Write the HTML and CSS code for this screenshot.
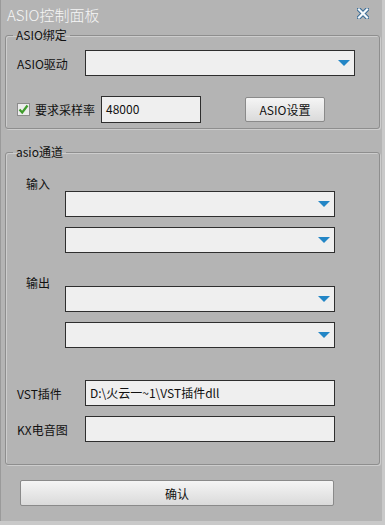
FILE: index.html
```html
<!DOCTYPE html>
<html lang="zh-CN">
<head>
    <meta charset="UTF-8">
    <title>ASIO控制面板</title>
    <link rel="stylesheet" href="styles.css">
</head>
<body>
    <div class="window">
        <div class="titlebar">
            <span class="title">ASIO控制面板</span>
            <svg class="close-icon" width="12" height="11" viewBox="0 0 12 11">
                <path d="M2 1.5 L10 9.5 M10 1.5 L2 9.5" stroke="#3c6d96" stroke-width="4.4" stroke-linecap="square"/>
                <path d="M2 1.5 L10 9.5 M10 1.5 L2 9.5" stroke="#f4f8fb" stroke-width="2.2" stroke-linecap="square"/>
            </svg>
        </div>
        <div class="content">
            <fieldset class="group">
                <legend>ASIO绑定</legend>
                <div class="rows binding">
                    <div class="row">
                        <span class="label">ASIO驱动</span>
                        <div class="combo"><span class="arrow"></span></div>
                    </div>
                    <div class="row rate-row">
                        <svg class="checkbox" width="13" height="13" viewBox="0 0 13 13">
                            <rect x="0.5" y="0.5" width="12" height="12" fill="#ececec" stroke="#8c8c8c"/>
                            <path d="M2.5 6.5 L5.2 9.5 L10.5 2.5" fill="none" stroke="#3f9c2c" stroke-width="2.2"/>
                        </svg>
                        <span class="check-label">要求采样率</span>
                        <div class="field rate">48000</div>
                        <button class="btn asio-btn">ASIO设置</button>
                    </div>
                </div>
            </fieldset>

            <fieldset class="group channels">
                <legend>asio通道</legend>
                <div class="rows">
                    <div class="section-label first">输入</div>
                    <div class="combo indent"><span class="arrow"></span></div>
                    <div class="combo indent gap"><span class="arrow"></span></div>

                    <div class="section-label second">输出</div>
                    <div class="combo indent"><span class="arrow"></span></div>
                    <div class="combo indent gap"><span class="arrow"></span></div>

                    <div class="row plugin-row">
                        <span class="label">VST插件</span>
                        <div class="field wide">D:\火云一~1\VST插件dll</div>
                    </div>
                    <div class="row plugin-row next">
                        <span class="label">KX电音图</span>
                        <div class="field wide"></div>
                    </div>
                </div>
            </fieldset>

            <button class="btn confirm">确认</button>
        </div>
    </div>
</body>
</html>
```

FILE: styles.css
```css
* {
    box-sizing: border-box;
}
body {
    margin: 0;
    width: 385px;
    height: 525px;
    overflow: hidden;
    background-color: #c9c9c9;
    font-family: "Noto Sans CJK SC", sans-serif;
    font-size: 12px;
    color: #111;
}
.window {
    width: 382px;
    height: 521px;
    background-color: #b4b4b4;
    border-left: 1px solid #9a9a9a;
    display: flex;
    flex-direction: column;
}
.titlebar {
    height: 28px;
    padding: 2px 13px 0 6px;
    display: flex;
    justify-content: space-between;
    align-items: center;
}
.title {
    font-size: 15px;
    font-weight: 300;
    line-height: 18px;
    color: #f6f6f6;
}
.close-icon {
    margin-top: -3px;
}
.content {
    padding: 0 2px 0 4px;
}
.group {
    margin: 0;
    padding: 0;
    border: 1px solid #8e8e8e;
    border-radius: 3px;
    box-shadow: inset 1px 1px 0 #cdcdcd, 1px 1px 0 #cdcdcd;
}
.group legend {
    margin-left: 7px;
    padding: 0 3px;
    line-height: 14px;
}
.rows {
    padding: 8px 0 5px 11px;
}
.channels {
    margin-top: 16px;
}
.channels .rows {
    padding: 0 0 22px 0;
}
.row {
    display: flex;
    align-items: center;
}
.label {
    width: 68px;
}
.combo {
    position: relative;
    width: 270px;
    height: 26px;
    background-color: #efefef;
    border: 1px solid #2e2e2e;
}
.arrow {
    position: absolute;
    right: 4px;
    top: 9px;
    width: 0;
    height: 0;
    border-left: 6px solid transparent;
    border-right: 6px solid transparent;
    border-top: 6px solid #2386c6;
}
.rate-row {
    margin-top: 20px;
}
.checkbox {
    margin-right: 5px;
}
.field {
    height: 26px;
    background-color: #efefef;
    border: 1px solid #2e2e2e;
    padding-left: 4px;
    line-height: 24px;
}
.rate {
    width: 100px;
    height: 27px;
    margin-left: 6px;
}
.btn {
    font-family: "Noto Sans CJK SC", sans-serif;
    font-size: 12px;
    color: #111;
    background: linear-gradient(#f5f5f5, #dadada);
    border: 1px solid #8a8a8a;
    border-radius: 2px;
    padding: 0;
}
.asio-btn {
    width: 80px;
    height: 25px;
    margin-left: 44px;
}
.section-label {
    padding-left: 20px;
    line-height: 14px;
}
.section-label.first {
    margin-top: 18px;
}
.section-label.second {
    margin-top: 23px;
    margin-bottom: -4px;
}
.indent {
    margin-left: 59px;
}
.gap {
    margin-top: 10px;
}
.plugin-row {
    padding-left: 11px;
    margin-top: 32px;
}
.plugin-row.next {
    margin-top: 10px;
}
.wide {
    width: 250px;
}
.confirm {
    display: block;
    width: 314px;
    height: 26px;
    margin: 15px 0 0 15px;
}
```
